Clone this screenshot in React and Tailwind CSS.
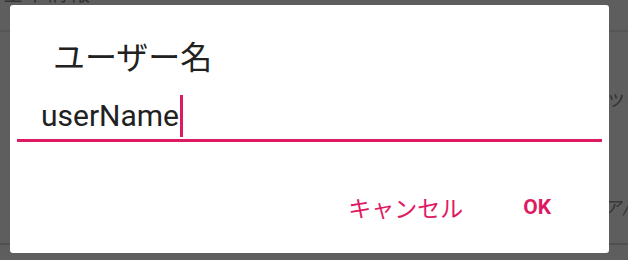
import React from "react";

const jp = { fontFamily: '"Noto Sans CJK JP", "Noto Sans", sans-serif' };
const roboto = { fontFamily: 'Roboto, "Noto Sans CJK JP", sans-serif' };

function Backdrop() {
  // dimmed screen behind the dialog
  return (
    <div className="flex h-[260px] w-[628px] flex-col overflow-hidden bg-[#5e5e5e] text-[#343434]" style={jp}>
      <div className="-mt-[22px] h-[24px] whitespace-nowrap pl-[2px] text-[22px] leading-[24px]">基本情報</div>
      <div className="mt-[28px] h-[2px] bg-[#555555]" />
      <div className="mt-[54px] h-[24px] whitespace-nowrap pl-[606px] text-[20px] leading-[24px]">ッテ</div>
      <div className="mt-[82px] h-[24px] whitespace-nowrap pl-[603px] text-[20px] leading-[24px] italic">ァ/</div>
      <div className="mt-[27px] h-[2px] bg-[#505050]" />
    </div>
  );
}

function UserNameDialog() {
  return (
    <div className="absolute left-[10px] top-[5px] flex h-[248px] w-[599px] flex-col rounded-[3px] bg-white">
      <div className="pl-[43px] pt-[31px] text-[32px] leading-[38px] text-[#212121]" style={jp}>
        ユーザー名
      </div>

      <div className="mt-[21px] flex h-[42px] items-center pl-[31px]">
        <span className="text-[30px] leading-[42px] text-[#212121]" style={roboto}>
          userName
        </span>
        <span className="ml-[1px] h-[42px] w-[3px] bg-[#de1b62]" />
      </div>
      <div className="mx-[7px] mt-[2px] h-[3px] bg-[#de1b62]" />

      <div className="mt-[45px] flex h-[40px] items-center justify-end gap-[60px] pr-[58px] text-[#de1b62]">
        <span className="text-[23px] leading-[40px]" style={jp}>
          キャンセル
        </span>
        <span className="text-[21px] font-bold leading-[40px]" style={roboto}>
          OK
        </span>
      </div>
    </div>
  );
}

export default function App() {
  return (
    <div className="relative h-[260px] w-[628px] overflow-hidden">
      <Backdrop />
      <UserNameDialog />
    </div>
  );
}
